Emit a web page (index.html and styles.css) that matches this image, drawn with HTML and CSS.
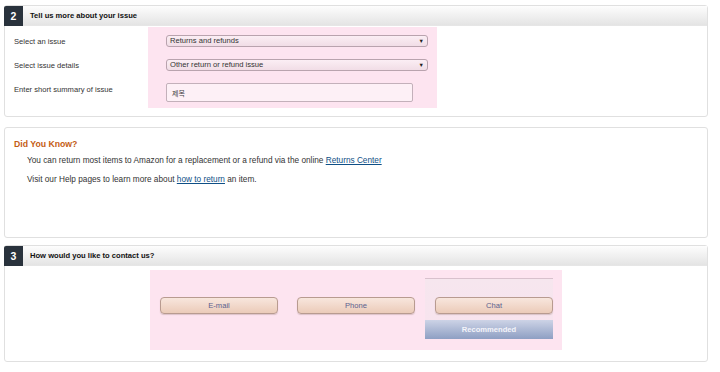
FILE: index.html
```html
<!DOCTYPE html>
<html lang="en">
<head>
<meta charset="utf-8">
<link rel="stylesheet" href="styles.css">
</head>
<body>
<div class="page">
  <section class="panel panel-issue">
    <div class="panel-head"><span class="step">2</span><h2>Tell us more about your issue</h2></div>
    <div class="issue-body">
      <div class="labels">
        <div class="lrow">Select an issue</div>
        <div class="lrow">Select issue details</div>
        <div class="lrow">Enter short summary of issue</div>
      </div>
      <div class="fields">
        <div class="select"><span>Returns and refunds</span><span class="arrow">&#9660;</span></div>
        <div class="select"><span>Other return or refund issue</span><span class="arrow">&#9660;</span></div>
        <div class="input">제목</div>
      </div>
    </div>
  </section>

  <section class="panel panel-know">
    <h3>Did You Know?</h3>
    <p class="p1">You can return most items to Amazon for a replacement or a refund via the online <a href="#">Returns Center</a></p>
    <p class="p2">Visit our Help pages to learn more about <a href="#">how to return</a> an item.</p>
  </section>

  <section class="panel panel-contact">
    <div class="panel-head"><span class="step">3</span><h2>How would you like to contact us?</h2></div>
    <div class="contact-body">
      <div class="options">
        <button class="btn">E-mail</button>
        <button class="btn">Phone</button>
        <div class="recommend">
          <button class="btn">Chat</button>
          <div class="rec-band">Recommended</div>
        </div>
      </div>
    </div>
  </section>
</div>
</body>
</html>
```

FILE: styles.css
```css
* { box-sizing: border-box; }
html, body { margin: 0; padding: 0; background: #fff; }
body {
  font-family: "Liberation Sans", Arial, sans-serif;
  font-size: 7.6px;
  color: #333;
}
.page {
  padding: 5px 12px 0 4px;
  display: flex;
  flex-direction: column;
}
.panel {
  border: 1px solid #e0e0e0;
  border-radius: 3px;
  background: #fff;
}
.panel-issue { height: 112px; }
.panel-know { height: 111px; margin-top: 10px; padding: 10px 0 0 9px; }
.panel-contact { height: 117px; margin-top: 7px; }

.panel-head {
  height: 20px;
  display: flex;
  align-items: center;
  background: linear-gradient(#fdfdfd, #e4e4e4);
  border-bottom: 1px solid #e6e6e6;
}
.step {
  width: 19px;
  height: 20px;
  margin-left: -1px;
  background: #29323c;
  color: #fff;
  font-weight: bold;
  font-size: 10.5px;
  display: flex;
  align-items: center;
  justify-content: center;
  border-radius: 2px 0 0 0;
}
.panel-head h2 {
  margin: 0 0 0 7px;
  font-size: 7.6px;
  font-weight: bold;
  color: #111;
}

.issue-body {
  display: flex;
  padding-top: 1px;
}
.labels {
  width: 143px;
  padding: 8px 0 0 9px;
}
.lrow {
  height: 24px;
  line-height: 12px;
  padding-top: 1px;
}
.fields {
  width: 289px;
  height: 81px;
  background: #fde4f0;
  padding: 8px 9px 6px 18px;
  display: flex;
  flex-direction: column;
  gap: 12px;
}
.select {
  height: 12px;
  border: 1px solid #b9a3ae;
  border-radius: 3px;
  background: linear-gradient(#fbeef4, #f1dde6);
  display: flex;
  align-items: center;
  justify-content: space-between;
  padding: 0 3px 0 3px;
  color: #333;
  line-height: 10px;
}
.arrow {
  font-size: 5.5px;
  color: #222;
}
.input {
  width: 247px;
  height: 19px;
  border: 1px solid #c3b0ba;
  border-radius: 2px;
  background: #fdf0f6;
  display: flex;
  align-items: center;
  padding-left: 5px;
  font-family: "Noto Sans CJK KR", "Liberation Sans", sans-serif;
  font-size: 7px;
  color: #444;
}

.panel-know h3 {
  margin: 0;
  font-size: 8.7px;
  line-height: 12px;
  color: #c45c13;
  font-weight: bold;
}
.panel-know p {
  margin: 0;
  padding-left: 13px;
  line-height: 12px;
  font-size: 8.25px;
  color: #333;
}
.panel-know .p1 { margin-top: 5px; }
.panel-know .p2 { margin-top: 7px; }
.panel-know a { color: #0f4f86; text-decoration: underline; }

.contact-body {
  padding: 4px 0 0 145px;
}
.options {
  width: 412px;
  height: 80px;
  background: #fde4f0;
  padding: 0 8px 0 10px;
  display: flex;
  align-items: flex-start;
}
.btn {
  width: 118px;
  height: 17px;
  margin: 27px 0 0 0;
  padding: 0;
  border: 1px solid #b89b90;
  border-radius: 4px;
  background: linear-gradient(#f8e6dd, #ebcbb9);
  font-family: "Liberation Sans", Arial, sans-serif;
  font-size: 7.6px;
  color: #5b5f8e;
  box-shadow: 0 1px 1px rgba(120, 90, 80, 0.25);
}
.options > .btn + .btn { margin-left: 19px; }
.recommend {
  width: 128px;
  margin: 8px 0 0 10px;
  border-top: 1px solid #d8c1cd;
  background: linear-gradient(#f6e6ee, #f8e3ee);
  padding-top: 18px;
  padding-left: 10px;
  display: flex;
  flex-direction: column;
}
.recommend .btn { margin: 0; }
.rec-band {
  margin: 6px 0 0 -10px;
  height: 19px;
  background: linear-gradient(#cdd3e6, #8e9fc3);
  color: #f4f4fa;
  font-weight: bold;
  display: flex;
  align-items: center;
  justify-content: center;
}
```
